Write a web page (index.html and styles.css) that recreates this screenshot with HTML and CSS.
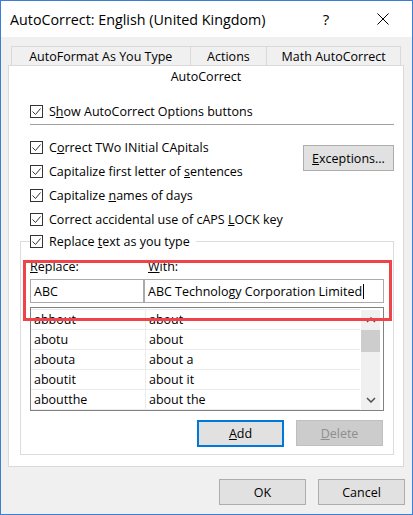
FILE: index.html
```html
<!DOCTYPE html>
<html>
<head>
<meta charset="utf-8">
<title>AutoCorrect</title>
<link rel="stylesheet" href="styles.css">
</head>
<body>
<div class="window">
  <div class="titlebar">
    <div class="title">AutoCorrect: English (United Kingdom)</div>
    <div class="tb-btn help">?</div>
    <div class="tb-btn close"><svg width="12" height="12" viewBox="0 0 12 12"><path d="M0.5 0.5L11.5 11.5M11.5 0.5L0.5 11.5" stroke="#000" stroke-width="1" fill="none"/></svg></div>
  </div>
  <div class="client">
    <div class="tabs">
      <div class="tab t1">AutoFormat As You Type</div>
      <div class="tab t2">Actions</div>
      <div class="tab t3">Math AutoCorrect</div>
    </div>
    <div class="panel">
      <div class="panel-tab">AutoCorrect</div>
      <div class="panel-body">
        <div class="cb-row show"><span class="cb"><svg width="11" height="11" viewBox="0 0 11 11"><path d="M1.5 5.5L4.5 8.5L9.5 2.5" fill="none" stroke="#333" stroke-width="1"/></svg></span><span>S<u>h</u>ow AutoCorrect Options buttons</span></div>
        <div class="sep"></div>
        <div class="mid">
          <div class="mid-left">
            <div class="cb-row"><span class="cb"><svg width="11" height="11" viewBox="0 0 11 11"><path d="M1.5 5.5L4.5 8.5L9.5 2.5" fill="none" stroke="#333" stroke-width="1"/></svg></span><span>C<u>o</u>rrect TWo INitial CApitals</span></div>
            <div class="cb-row"><span class="cb"><svg width="11" height="11" viewBox="0 0 11 11"><path d="M1.5 5.5L4.5 8.5L9.5 2.5" fill="none" stroke="#333" stroke-width="1"/></svg></span><span>Capitalize first letter of <u>s</u>entences</span></div>
            <div class="cb-row"><span class="cb"><svg width="11" height="11" viewBox="0 0 11 11"><path d="M1.5 5.5L4.5 8.5L9.5 2.5" fill="none" stroke="#333" stroke-width="1"/></svg></span><span>Capitalize <u>n</u>ames of days</span></div>
            <div class="cb-row"><span class="cb"><svg width="11" height="11" viewBox="0 0 11 11"><path d="M1.5 5.5L4.5 8.5L9.5 2.5" fill="none" stroke="#333" stroke-width="1"/></svg></span><span>Correct accidental use of cAPS <u>L</u>OCK key</span></div>
          </div>
          <div class="btn exceptions"><span><u>E</u>xceptions...</span></div>
        </div>
        <fieldset class="group">
          <legend><div class="cb-row"><span class="cb"><svg width="11" height="11" viewBox="0 0 11 11"><path d="M1.5 5.5L4.5 8.5L9.5 2.5" fill="none" stroke="#333" stroke-width="1"/></svg></span><span>Replace <u>t</u>ext as you type</span></div></legend>
          <div class="gwrap">
            <div class="labels"><span class="lab1"><u>R</u>eplace:</span><span class="lab2"><u>W</u>ith:</span></div>
            <div class="inputs">
              <div class="field f1">ABC</div>
              <div class="field f2">ABC Technology Corporation Limited<span class="caret"></span></div>
            </div>
            <div class="list">
              <div class="rows">
                <div class="row"><div class="c1">abbout</div><div class="c2">about</div></div>
                <div class="row"><div class="c1">abotu</div><div class="c2">about</div></div>
                <div class="row"><div class="c1">abouta</div><div class="c2">about a</div></div>
                <div class="row"><div class="c1">aboutit</div><div class="c2">about it</div></div>
                <div class="row"><div class="c1">aboutthe</div><div class="c2">about the</div></div>
              </div>
              <div class="scroll">
                <div class="arrow"><svg width="10" height="6" viewBox="0 0 10 6"><path d="M1 5L5 1L9 5" fill="none" stroke="#505050" stroke-width="1.5"/></svg></div>
                <div class="thumb"></div>
                <div class="track"></div>
                <div class="arrow"><svg width="10" height="6" viewBox="0 0 10 6"><path d="M1 1L5 5L9 1" fill="none" stroke="#505050" stroke-width="1.5"/></svg></div>
              </div>
            </div>
            <div class="actions">
              <div class="btn add"><span><u>A</u>dd</span></div>
              <div class="btn delete"><span><u>D</u>elete</span></div>
            </div>
            <div class="highlight"></div>
          </div>
        </fieldset>
      </div>
    </div>
    <div class="footer">
      <div class="btn">OK</div>
      <div class="btn">Cancel</div>
    </div>
  </div>
</div>
</body>
</html>
```
FILE: styles.css
```css
* { box-sizing: border-box; }
html, body { margin: 0; padding: 0; }
body {
  font-family: "Open Sans", "Noto Sans", sans-serif;
  font-size: 12.5px;
  color: #000;
  background: #fff;
}
.window {
  width: 413px;
  height: 515px;
  border: 1px solid #3a7fd5;
  display: flex;
  flex-direction: column;
  background: #f0f0f0;
}
.titlebar {
  height: 36px;
  background: #fff;
  display: flex;
  align-items: center;
  flex: none;
}
.title {
  flex: 1;
  padding-left: 9px;
  font-size: 14.3px;
  white-space: nowrap;
}
.tb-btn {
  width: 46px;
  height: 36px;
  display: flex;
  align-items: center;
  justify-content: center;
}
.help { font-size: 15px; margin-right: 11px; }
.close { margin-right: 6px; }
.client {
  flex: 1;
  padding: 9px 8px 0 7px;
}
.tabs {
  display: flex;
  margin: 0 3px;
  height: 19px;
}
.tab {
  border: 1px solid #d9d9d9;
  border-bottom: none;
  display: flex;
  align-items: center;
  justify-content: center;
  padding-top: 1px;
  white-space: nowrap;
}
.t1 { width: 180px; }
.t2 { width: 77px; border-left: none; }
.t3 { width: 134px; border-left: none; }
.panel {
  background: #fff;
  border: 1px solid #d9d9d9;
}
.panel-tab {
  height: 21px;
  line-height: 21px;
  text-align: center;
}
.panel-body {
  padding: 0 9px 11px 11px;
}
.cb-row {
  display: flex;
  align-items: center;
  height: 24px;
  white-space: nowrap;
}
.show { margin-top: 12px; padding-left: 10px; }
.sep {
  height: 1px;
  background: #a0a0a0;
  margin: 1px 0 10px 10px;
}
.mid {
  display: flex;
  justify-content: space-between;
  align-items: flex-start;
}
.mid-left { padding-left: 10px; }
.btn {
  display: flex;
  align-items: center;
  justify-content: center;
  background: #e1e1e1;
  border: 1px solid #adadad;
  white-space: nowrap;
}
.exceptions {
  width: 91px;
  height: 26px;
  margin-top: 10px;
}
.cb {
  width: 13px;
  height: 13px;
  border: 1px solid #333;
  display: inline-flex;
  margin-right: 6px;
  flex: none;
  background: #fff;
}
.cb svg { display: block; }
.group {
  margin: -2px 0 0 0;
  padding: 0;
  border: 1px solid #dcdcdc;
  min-width: 0;
}
.group legend {
  margin-left: 9px;
  padding: 0 6px 0 0;
}
.gwrap {
  position: relative;
  padding: 0 9px 7px 9px;
}
.labels {
  display: flex;
  margin-top: 6px;
  line-height: 16px;
}
.lab1 { width: 114px; }
.lab2 { padding-left: 4px; }
.inputs {
  display: flex;
  margin-top: 4px;
  height: 24px;
}
.field {
  border: 1px solid #ababab;
  display: flex;
  align-items: center;
  padding-left: 3px;
  background: #fff;
  white-space: nowrap;
}
.f1 { width: 114px; }
.f2 { flex: 1; }
.caret {
  display: inline-block;
  width: 1px;
  height: 15px;
  background: #000;
  margin-left: 1px;
}
.list {
  margin-top: 4px;
  height: 104px;
  border: 1px solid #828282;
  padding: 1px 3px 0 0;
  display: flex;
  align-items: flex-start;
  background: #fff;
}
.rows {
  width: 329px;
  border-top: 1px solid #ececec;
}
.row {
  display: flex;
  height: 20px;
  border-bottom: 1px solid #ececec;
}
.c1 {
  width: 115px;
  border-right: 1px solid #ececec;
  padding-left: 3px;
  display: flex;
  align-items: center;
}
.c2 {
  flex: 1;
  padding-left: 3px;
  display: flex;
  align-items: center;
}
.scroll {
  width: 19px;
  height: 100px;
  margin: 1px 0 0 1px;
  background: #f0f0f0;
  display: flex;
  flex-direction: column;
}
.arrow {
  height: 20px;
  display: flex;
  align-items: center;
  justify-content: center;
}
.arrow svg { display: block; }
.thumb { height: 22px; background: #cdcdcd; }
.track { flex: 1; }
.actions {
  display: flex;
  justify-content: flex-end;
  align-items: flex-start;
  gap: 12px;
  margin-top: 9px;
  padding-right: 1px;
}
.add {
  width: 87px;
  height: 27px;
  border: 2px solid #0078d7;
}
.delete {
  width: 87px;
  height: 26px;
  background: #cccccc;
  border-color: #bfbfbf;
  color: #8f8f8f;
}
.highlight {
  position: absolute;
  left: 2px;
  top: 1px;
  width: 369px;
  height: 61px;
  border: 3px solid #ef4349;
  pointer-events: none;
}
.footer {
  display: flex;
  justify-content: flex-end;
  gap: 12px;
  margin-top: 12px;
  margin-right: -1px;
}
.footer .btn {
  width: 87px;
  height: 26px;
}
```
